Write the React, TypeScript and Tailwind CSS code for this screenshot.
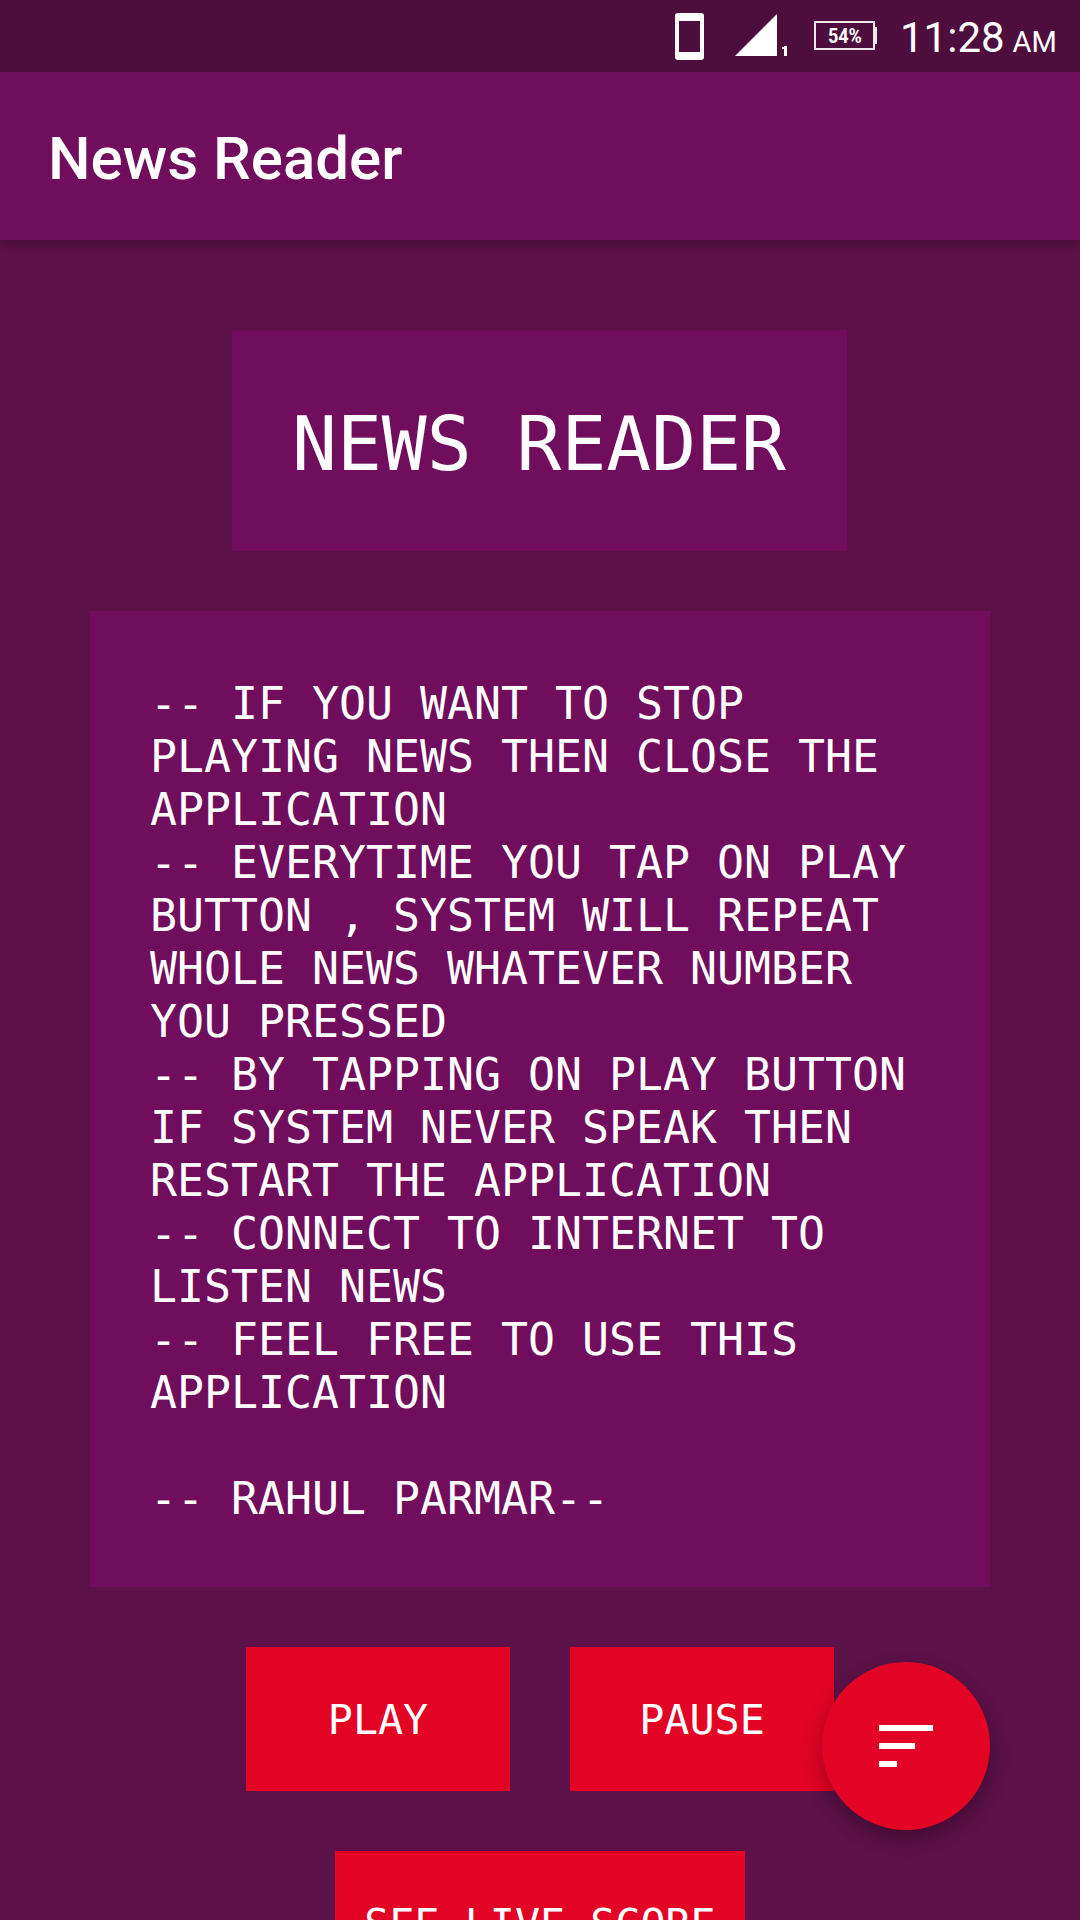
const mono = "font-['DejaVu_Sans_Mono','Liberation_Mono',monospace]";

const lines = `-- IF YOU WANT TO STOP
PLAYING NEWS THEN CLOSE THE
APPLICATION
-- EVERYTIME YOU TAP ON PLAY
BUTTON , SYSTEM WILL REPEAT
WHOLE NEWS WHATEVER NUMBER
YOU PRESSED
-- BY TAPPING ON PLAY BUTTON
IF SYSTEM NEVER SPEAK THEN
RESTART THE APPLICATION
-- CONNECT TO INTERNET TO
LISTEN NEWS
-- FEEL FREE TO USE THIS
APPLICATION

-- RAHUL PARMAR--`;

function StatusBar() {
  return (
    <div className="h-[72px] shrink-0 bg-[#4e0e3d] flex items-center text-white relative">
      <svg className="absolute left-[675px] top-[13px]" width="30" height="47" viewBox="0 0 30 47">
        <path fillRule="evenodd" fill="#fff" d="M3 0h23a3 3 0 0 1 3 3v41a3 3 0 0 1-3 3H3a3 3 0 0 1-3-3V3a3 3 0 0 1 3-3zM4 8v31h21V8z" />
      </svg>
      <svg className="absolute left-[734px] top-[14px]" width="56" height="44" viewBox="0 0 56 44">
        <path fill="#fff" d="M1 42 L43 0 V42 Z" />
        <rect x="50" y="32" width="3" height="10" fill="#fff" />
        <rect x="48" y="33" width="3" height="2" fill="#fff" />
      </svg>
      <div className="absolute left-[814px] top-[21px] w-[61px] h-[29px] border-2 border-white/90 flex items-center justify-center">
        <span className="font-['Roboto',sans-serif] font-bold text-[20px] leading-none scale-x-90">54%</span>
      </div>
      <div className="absolute left-[875px] top-[27px] w-[2px] h-[17px] bg-white/90" />
      <span className="absolute left-[900px] top-[13px] font-['Roboto',sans-serif] text-[42px] leading-[50px] whitespace-nowrap">
        11:28<span className="text-[29px] ml-[8px]">AM</span>
      </span>
    </div>
  );
}

function Btn({ children, className }: { children: string; className: string }) {
  return (
    <div className={`bg-[#e30425] h-[144px] flex items-center justify-center text-white text-[41.7px] pt-[3px] ${mono} ${className}`}>
      {children}
    </div>
  );
}

export default function App() {
  return (
    <div className="w-[1080px] h-[1920px] overflow-hidden bg-[#5c1148] flex flex-col relative">
      <StatusBar />
      <div className="h-[168px] shrink-0 bg-[#700d5c] flex items-center pl-[48px] pt-[5px] shadow-[0_4px_10px_rgba(0,0,0,0.25)] relative z-10">
        <span className="font-['Roboto',sans-serif] font-medium text-[60px] text-white leading-none">News Reader</span>
      </div>
      <div className="flex flex-col items-center pt-[90px]">
        <div className={`w-[615px] h-[221px] -translate-x-px bg-[#700d5c] flex items-center justify-center text-white text-[74.6px] pt-[8px] ${mono}`}>
          NEWS READER
        </div>
        <div className={`mt-[60px] w-[900px] h-[976px] bg-[#700d5c] pl-[60px] pt-[66px] text-white text-[44.85px] leading-[53px] whitespace-pre ${mono}`}>
          {lines}
        </div>
        <div className="mt-[60px] flex gap-[60px] w-[588px]">
          <Btn className="w-[264px]">PLAY</Btn>
          <Btn className="w-[264px]">PAUSE</Btn>
        </div>
        <Btn className="mt-[60px] w-[410px] shrink-0">SEE LIVE SCORE</Btn>
      </div>
      <div className="absolute left-[822px] top-[1662px] w-[168px] h-[168px] rounded-full bg-[#e30425] shadow-[0_8px_20px_rgba(0,0,0,0.3)] flex flex-col items-start justify-center gap-[12px] pl-[57px]">
        <div className="w-[54px] h-[6px] bg-white" />
        <div className="w-[36px] h-[6px] bg-white" />
        <div className="w-[18px] h-[6px] bg-white" />
      </div>
    </div>
  );
}
